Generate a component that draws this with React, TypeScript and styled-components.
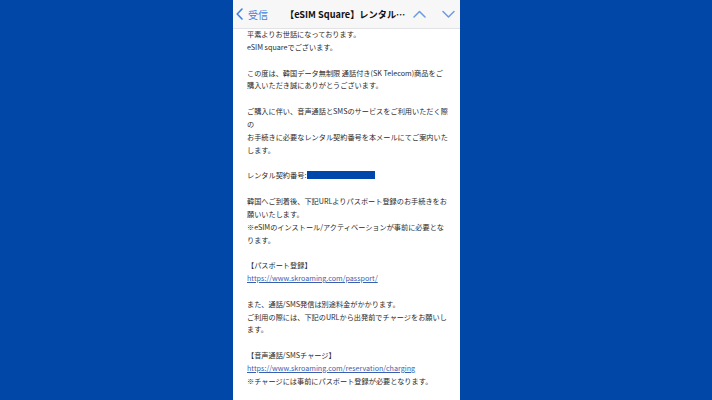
import React from "react";
import styled, { createGlobalStyle } from "styled-components";

const Global = createGlobalStyle`
  html, body { margin: 0; padding: 0; }
  body { background: #0047a8; width: 712px; height: 400px; overflow: hidden; }
`;

const Page = styled.div`
  display: flex;
  height: 400px;
  padding-left: 233px;
  background: #0047a8;
`;

const Phone = styled.div`
  width: 227px;
  height: 400px;
  background: #ffffff;
  display: flex;
  flex-direction: column;
  overflow: hidden;
`;

const Header = styled.div`
  height: 28px;
  flex: none;
  background: #f7f7f8;
  border-bottom: 1px solid #e2e2e4;
  display: flex;
  align-items: center;
  font-family: "Noto Sans CJK JP", "Noto Sans", sans-serif;
`;

const Back = styled.div`
  width: 52px;
  flex: none;
  display: flex;
  align-items: center;
  gap: 5px;
  padding-left: 3px;
  box-sizing: border-box;
  color: #3f7fe0;
  font-size: 10px;
`;

const Title = styled.div`
  flex: none;
  font-size: 9.2px;
  font-weight: 700;
  color: #111;
  white-space: nowrap;
`;

const Nav = styled.div`
  margin-left: auto;
  display: flex;
  align-items: center;
  gap: 16px;
  padding-right: 5px;
`;

const Body = styled.div`
  padding: 0 0 0 14px;
  margin-top: -1px;
  font-family: "Noto Sans CJK JP", "Noto Sans", sans-serif;
  font-size: 7.18px;
  line-height: 12.85px;
  color: #2a2a2a;
`;

const Line = styled.div`
  white-space: nowrap;
  min-height: 12.85px;
`;

const Link = styled.span`
  color: #3a5fb0;
  text-decoration: underline;
  text-underline-offset: 1px;
`;

const Redact = styled.span`
  display: inline-block;
  width: 68px;
  height: 8px;
  margin-left: 1px;
  background: #0047ab;
  vertical-align: -1px;
`;

const Chevron = ({ dir }: { dir: "left" | "up" | "down" }) => {
  if (dir === "left")
    return (
      <svg width="7" height="12" viewBox="0 0 7 12">
        <polyline points="6,1 1.2,6 6,11" fill="none" stroke="#3f7fe0" strokeWidth="1.6" strokeLinecap="round" strokeLinejoin="round" />
      </svg>
    );
  const pts = dir === "up" ? "1,7 6.5,1.5 12,7" : "1,1.5 6.5,7 12,1.5";
  return (
    <svg width="13" height="9" viewBox="0 0 13 9">
      <polyline points={pts} fill="none" stroke="#6b9be0" strokeWidth="1.5" strokeLinecap="round" strokeLinejoin="round" />
    </svg>
  );
};

const lines: React.ReactNode[] = [
  "平素よりお世話になっております。",
  "eSIM squareでございます。",
  "",
  "この度は、韓国データ無制限 通話付き(SK Telecom)商品をご",
  "購入いただき誠にありがとうございます。",
  "",
  "ご購入に伴い、音声通話とSMSのサービスをご利用いただく際",
  "の",
  "お手続きに必要なレンタル契約番号を本メールにてご案内いた",
  "します。",
  "",
  <>レンタル契約番号:<Redact /></>,
  "",
  "韓国へご到着後、下記URLよりパスポート登録のお手続きをお",
  "願いいたします。",
  "※eSIMのインストール/アクティベーションが事前に必要とな",
  "ります。",
  "",
  "【パスポート登録】",
  <Link>https://www.skroaming.com/passport/</Link>,
  "",
  "また、通話/SMS発信は別途料金がかかります。",
  "ご利用の際には、下記のURLから出発前でチャージをお願いし",
  "ます。",
  "",
  "【音声通話/SMSチャージ】",
  <Link>https://www.skroaming.com/reservation/charging</Link>,
  "※チャージには事前にパスポート登録が必要となります。",
];

export default function App() {
  return (
    <>
      <Global />
      <Page>
        <Phone>
          <Header>
            <Back>
              <Chevron dir="left" />
              <span>受信</span>
            </Back>
            <Title>【eSIM Square】レンタル…</Title>
            <Nav>
              <Chevron dir="up" />
              <Chevron dir="down" />
            </Nav>
          </Header>
          <Body>
            {lines.map((l, i) => (
              <Line key={i}>{l}</Line>
            ))}
          </Body>
        </Phone>
      </Page>
    </>
  );
}
